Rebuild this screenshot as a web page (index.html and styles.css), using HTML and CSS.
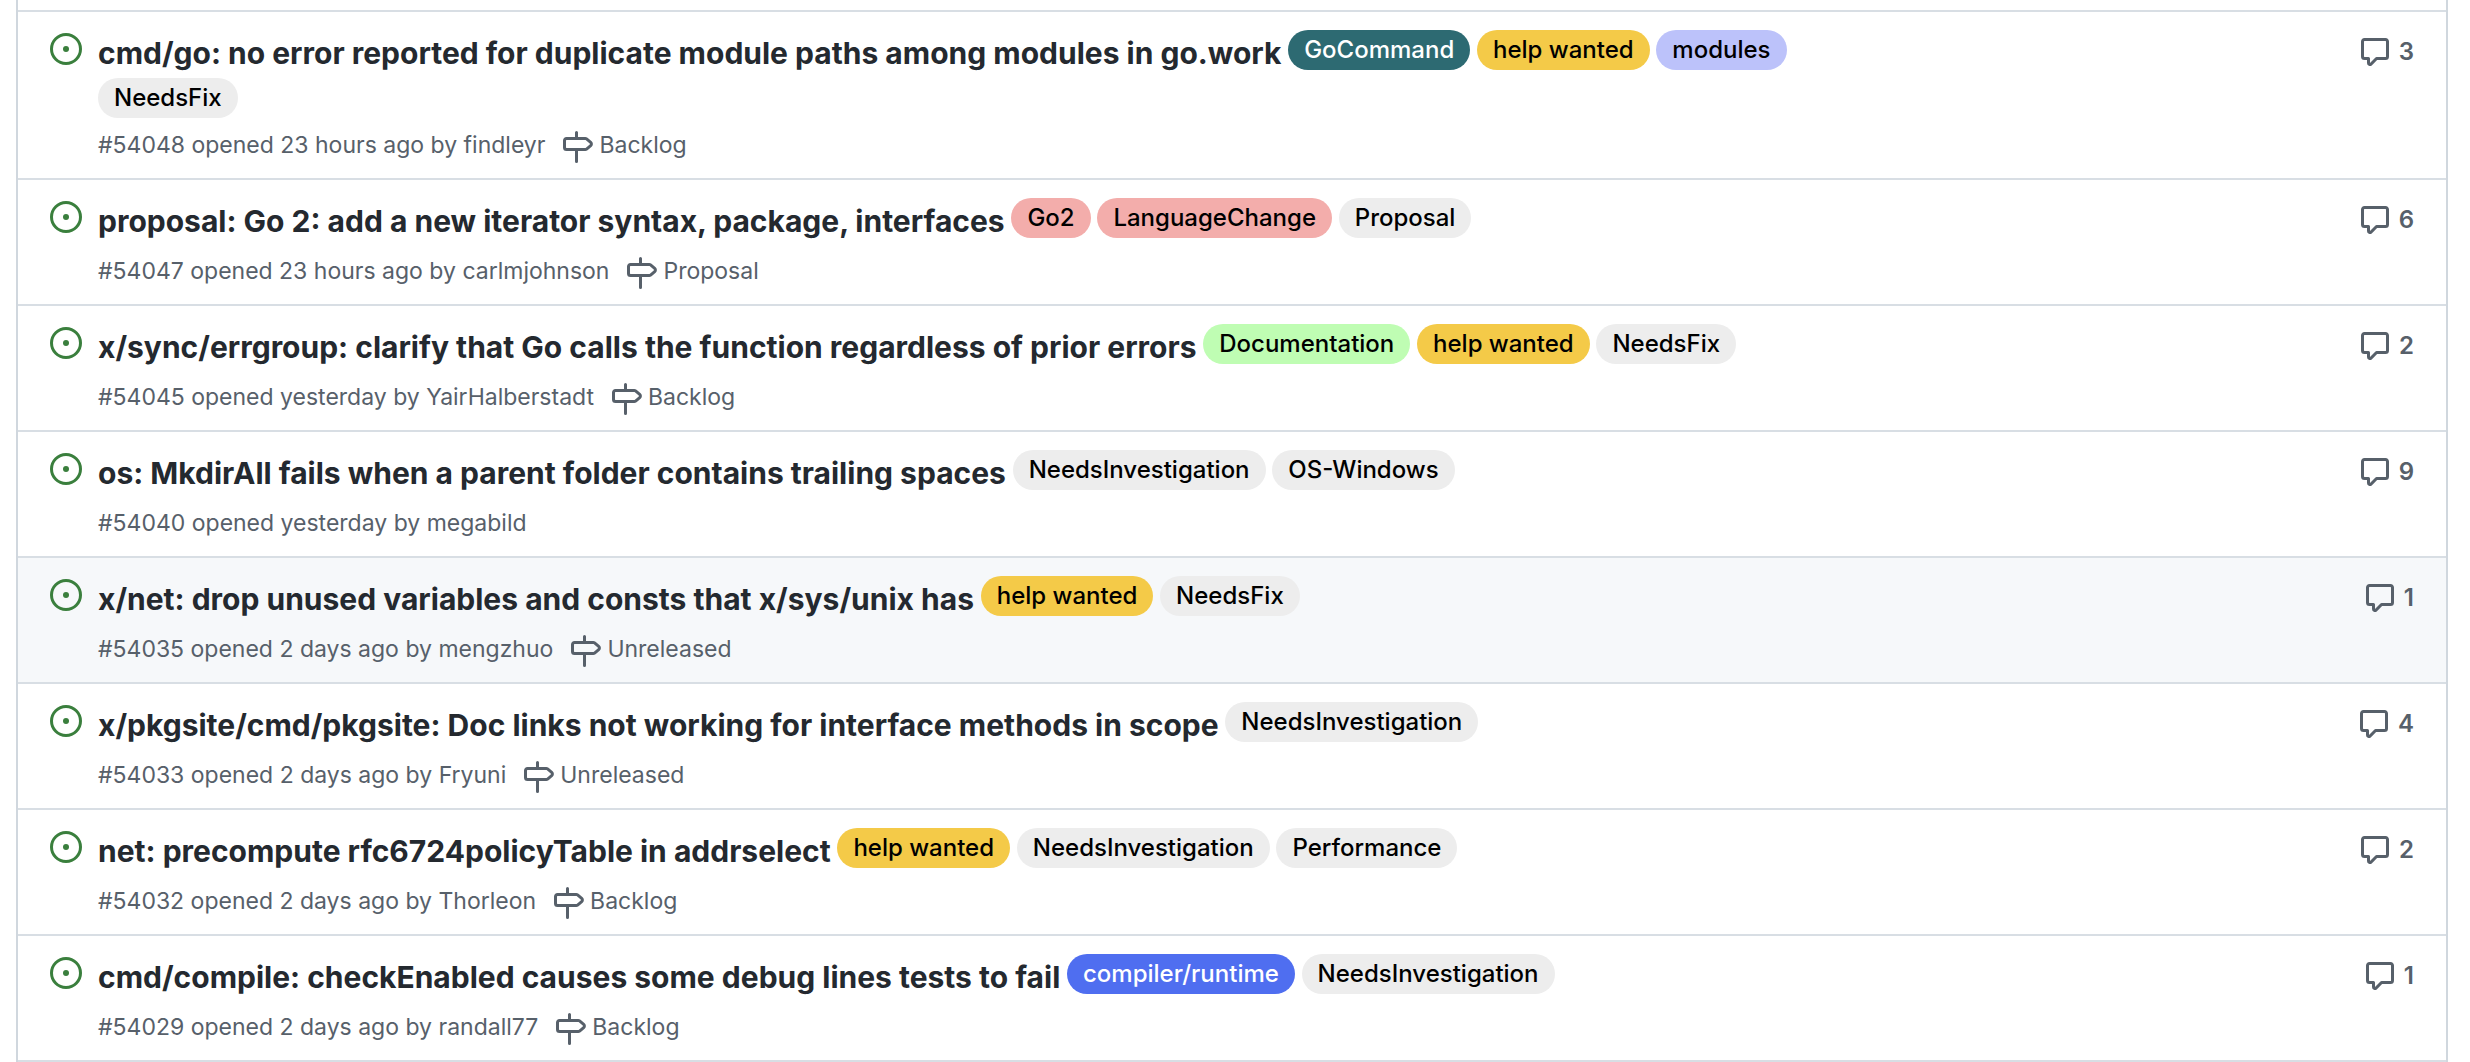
FILE: index.html
```html
<!DOCTYPE html>
<html lang="en">
<head>
<meta charset="utf-8">
<title>Issues</title>
<link rel="stylesheet" href="styles.css">
</head>
<body>
<svg class="sprite" aria-hidden="true">
  <symbol id="issue-opened" viewBox="0 0 16 16"><path d="M8 9.5a1.5 1.5 0 100-3 1.5 1.5 0 000 3z"/><path fill-rule="evenodd" d="M8 0a8 8 0 100 16A8 8 0 008 0zM1.5 8a6.5 6.5 0 1113 0 6.5 6.5 0 01-13 0z"/></symbol>
  <symbol id="milestone" viewBox="0 0 16 16"><path fill-rule="evenodd" d="M7.75 0a.75.75 0 01.75.75V3h3.634c.414 0 .814.147 1.13.414l2.07 1.75a1.75 1.75 0 010 2.672l-2.07 1.75a1.75 1.75 0 01-1.13.414H8.5v5.25a.75.75 0 11-1.5 0V10H2.75A1.75 1.75 0 011 8.25v-3.5C1 3.784 1.784 3 2.75 3H7V.75A.75.75 0 017.75 0zm0 8.5h4.384a.25.25 0 00.161-.06l2.07-1.75a.25.25 0 000-.38l-2.07-1.75a.25.25 0 00-.161-.06H2.75a.25.25 0 00-.25.25v3.5c0 .138.112.25.25.25h5z"/></symbol>
  <symbol id="comment" viewBox="0 0 16 16"><path fill-rule="evenodd" d="M2.75 2.5a.25.25 0 00-.25.25v7.5c0 .138.112.25.25.25h2a.75.75 0 01.75.75v2.19l2.72-2.72a.75.75 0 01.53-.22h4.5a.25.25 0 00.25-.25v-7.5a.25.25 0 00-.25-.25H2.75zM1 2.75C1 1.784 1.784 1 2.75 1h10.5c.966 0 1.75.784 1.75 1.75v7.5A1.75 1.75 0 0113.25 12H9.06l-2.573 2.573A1.457 1.457 0 014 13.543V12H2.75A1.75 1.75 0 011 10.25v-7.5z"/></symbol>
</svg>
<main class="issues">
  <article class="issue">
    <svg class="icon icon-open" role="img" aria-label="Open issue"><use href="#issue-opened"/></svg>
    <div class="issue-main">
      <div class="issue-heading"><a class="issue-title" href="#54048">cmd/go: no error reported for duplicate module paths among modules in go.work</a> <a class="label label-teal" href="#gocommand">GoCommand</a> <a class="label label-yellow" href="#help-wanted">help wanted</a> <a class="label label-violet" href="#modules">modules</a> <a class="label" href="#needsfix">NeedsFix</a></div>
      <div class="issue-meta"><span>#54048 opened 23 hours ago by <a href="#findleyr">findleyr</a></span><a class="milestone" href="#backlog"><svg class="icon"><use href="#milestone"/></svg>Backlog</a></div>
    </div>
    <div class="issue-side"><a class="comments" href="#54048"><svg class="icon" role="img" aria-label="Comments"><use href="#comment"/></svg>3</a></div>
  </article>
  <article class="issue">
    <svg class="icon icon-open" role="img" aria-label="Open issue"><use href="#issue-opened"/></svg>
    <div class="issue-main">
      <div class="issue-heading"><a class="issue-title" href="#54047">proposal: Go 2: add a new iterator syntax, package, interfaces</a> <a class="label label-pink" href="#go2">Go2</a> <a class="label label-pink" href="#languagechange">LanguageChange</a> <a class="label" href="#proposal">Proposal</a></div>
      <div class="issue-meta"><span>#54047 opened 23 hours ago by <a href="#carlmjohnson">carlmjohnson</a></span><a class="milestone" href="#proposal"><svg class="icon"><use href="#milestone"/></svg>Proposal</a></div>
    </div>
    <div class="issue-side"><a class="comments" href="#54047"><svg class="icon" role="img" aria-label="Comments"><use href="#comment"/></svg>6</a></div>
  </article>
  <article class="issue">
    <svg class="icon icon-open" role="img" aria-label="Open issue"><use href="#issue-opened"/></svg>
    <div class="issue-main">
      <div class="issue-heading"><a class="issue-title" href="#54045">x/sync/errgroup: clarify that Go calls the function regardless of prior errors</a> <a class="label label-green" href="#documentation">Documentation</a> <a class="label label-yellow" href="#help-wanted">help wanted</a> <a class="label" href="#needsfix">NeedsFix</a></div>
      <div class="issue-meta"><span>#54045 opened yesterday by <a href="#yairhalberstadt">YairHalberstadt</a></span><a class="milestone" href="#backlog"><svg class="icon"><use href="#milestone"/></svg>Backlog</a></div>
    </div>
    <div class="issue-side"><a class="comments" href="#54045"><svg class="icon" role="img" aria-label="Comments"><use href="#comment"/></svg>2</a></div>
  </article>
  <article class="issue">
    <svg class="icon icon-open" role="img" aria-label="Open issue"><use href="#issue-opened"/></svg>
    <div class="issue-main">
      <div class="issue-heading"><a class="issue-title" href="#54040">os: MkdirAll fails when a parent folder contains trailing spaces</a> <a class="label" href="#needsinvestigation">NeedsInvestigation</a> <a class="label" href="#os-windows">OS-Windows</a></div>
      <div class="issue-meta"><span>#54040 opened yesterday by <a href="#megabild">megabild</a></span></div>
    </div>
    <div class="issue-side"><a class="comments" href="#54040"><svg class="icon" role="img" aria-label="Comments"><use href="#comment"/></svg>9</a></div>
  </article>
  <article class="issue issue-active">
    <svg class="icon icon-open" role="img" aria-label="Open issue"><use href="#issue-opened"/></svg>
    <div class="issue-main">
      <div class="issue-heading"><a class="issue-title" href="#54035">x/net: drop unused variables and consts that x/sys/unix has</a> <a class="label label-yellow" href="#help-wanted">help wanted</a> <a class="label" href="#needsfix">NeedsFix</a></div>
      <div class="issue-meta"><span>#54035 opened 2 days ago by <a href="#mengzhuo">mengzhuo</a></span><a class="milestone" href="#unreleased"><svg class="icon"><use href="#milestone"/></svg>Unreleased</a></div>
    </div>
    <div class="issue-side"><a class="comments" href="#54035"><svg class="icon" role="img" aria-label="Comments"><use href="#comment"/></svg>1</a></div>
  </article>
  <article class="issue">
    <svg class="icon icon-open" role="img" aria-label="Open issue"><use href="#issue-opened"/></svg>
    <div class="issue-main">
      <div class="issue-heading"><a class="issue-title" href="#54033">x/pkgsite/cmd/pkgsite: Doc links not working for interface methods in scope</a> <a class="label" href="#needsinvestigation">NeedsInvestigation</a></div>
      <div class="issue-meta"><span>#54033 opened 2 days ago by <a href="#fryuni">Fryuni</a></span><a class="milestone" href="#unreleased"><svg class="icon"><use href="#milestone"/></svg>Unreleased</a></div>
    </div>
    <div class="issue-side"><a class="comments" href="#54033"><svg class="icon" role="img" aria-label="Comments"><use href="#comment"/></svg>4</a></div>
  </article>
  <article class="issue">
    <svg class="icon icon-open" role="img" aria-label="Open issue"><use href="#issue-opened"/></svg>
    <div class="issue-main">
      <div class="issue-heading"><a class="issue-title" href="#54032">net: precompute rfc6724policyTable in addrselect</a> <a class="label label-yellow" href="#help-wanted">help wanted</a> <a class="label" href="#needsinvestigation">NeedsInvestigation</a> <a class="label" href="#performance">Performance</a></div>
      <div class="issue-meta"><span>#54032 opened 2 days ago by <a href="#thorleon">Thorleon</a></span><a class="milestone" href="#backlog"><svg class="icon"><use href="#milestone"/></svg>Backlog</a></div>
    </div>
    <div class="issue-side"><a class="comments" href="#54032"><svg class="icon" role="img" aria-label="Comments"><use href="#comment"/></svg>2</a></div>
  </article>
  <article class="issue">
    <svg class="icon icon-open" role="img" aria-label="Open issue"><use href="#issue-opened"/></svg>
    <div class="issue-main">
      <div class="issue-heading"><a class="issue-title" href="#54029">cmd/compile: checkEnabled causes some debug lines tests to fail</a> <a class="label label-blue" href="#compiler-runtime">compiler/runtime</a> <a class="label" href="#needsinvestigation">NeedsInvestigation</a></div>
      <div class="issue-meta"><span>#54029 opened 2 days ago by <a href="#randall77">randall77</a></span><a class="milestone" href="#backlog"><svg class="icon"><use href="#milestone"/></svg>Backlog</a></div>
    </div>
    <div class="issue-side"><a class="comments" href="#54029"><svg class="icon" role="img" aria-label="Comments"><use href="#comment"/></svg>1</a></div>
  </article>
</main>
</body>
</html>
```
FILE: styles.css
```css
* {
  box-sizing: border-box;
}

body {
  margin: 0;
  background: #fff;
  color: #24292f;
  font-family: Inter, "Liberation Sans", sans-serif;
  font-size: 24px;
  line-height: 42px;
}

a {
  color: inherit;
  text-decoration: none;
}

.sprite {
  display: none;
}

.icon {
  flex: none;
  width: 32px;
  height: 32px;
  fill: currentColor;
}

.issues {
  margin: 0 22px 0 16px;
  padding-top: 10px;
  border: 2px solid #d0d7de;
  border-width: 0 2px;
}

.issue {
  display: flex;
  align-items: flex-start;
  padding-left: 32px;
  border-top: 2px solid #d8dee4;
}

.issue:last-child {
  border-bottom: 2px solid #d8dee4;
}

.issue-active {
  background: #f6f8fa;
}

.icon-open {
  margin-top: 21px;
  color: #3a7f3d;
}

.issue-main {
  flex: 1;
  min-width: 0;
  padding: 17px 16px 15px;
}

.issue-title {
  font-size: 30px;
  font-weight: 700;
  line-height: 48px;
}

.label {
  display: inline-block;
  margin-top: 1px;
  padding: 0 16px;
  border-radius: 20px;
  background: #ededed;
  color: #000;
  font-size: 24px;
  font-weight: 500;
  line-height: 40px;
  vertical-align: top;
  white-space: nowrap;
}

.label-teal {
  background: #2d6a72;
  color: #fff;
}

.label-yellow {
  background: #f4ca48;
}

.label-violet {
  background: #bcc2fa;
}

.label-pink {
  background: #f3adab;
}

.label-green {
  background: #bffdb3;
}

.label-blue {
  background: #4f6ef0;
  color: #fff;
}

.issue-meta {
  display: flex;
  align-items: flex-end;
  margin-top: 8px;
  color: #57606a;
  font-size: 23px;
  line-height: 36px;
}

.milestone {
  display: flex;
  align-items: flex-end;
  gap: 6px;
  margin-left: 16px;
}

.issue-side {
  display: flex;
  flex: 0 0 25%;
  justify-content: flex-end;
  padding: 22px 32px 0 0;
}

.comments {
  display: flex;
  align-items: center;
  gap: 8px;
  color: #57606a;
  font-size: 24px;
  font-weight: 600;
  line-height: 36px;
}
```
